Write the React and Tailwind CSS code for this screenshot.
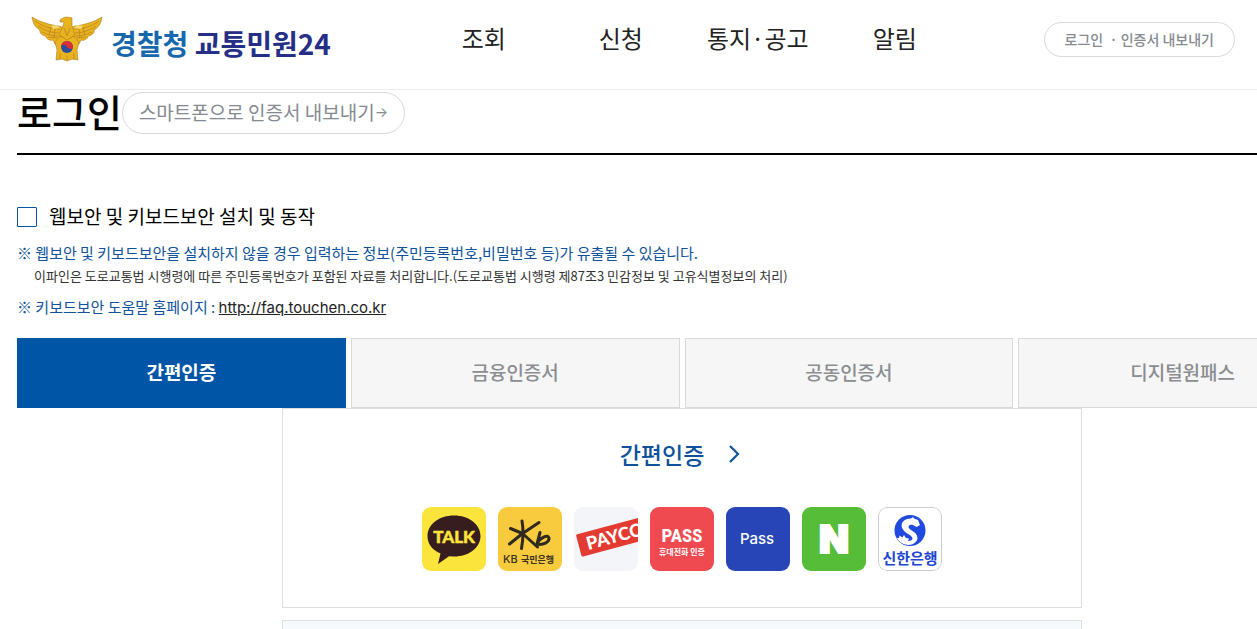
import { useState } from 'react';

const NAV = ['조회', '신청', '통지·공고', '알림'];
const TABS = ['간편인증', '금융인증서', '공동인증서', '디지털원패스'];

function PoliceEmblem() {
  return (
    <svg viewBox="0 0 72 46" className="h-[46px] w-[72px]" aria-hidden="true">
      <g fill="#e9b21f" stroke="#a9781c" strokeWidth="0.6" strokeLinejoin="round">
        <path d="M1 1 C9 6 19 9 28 10 L36 13 L44 10 C53 9 63 6 71 1 C70 8 67 12 63 14 C64 17 60 20 57 20 C57 23 53 25 50 24 L48 28 L24 28 L22 24 C19 25 15 23 15 20 C12 20 8 17 9 14 C5 12 2 8 1 1 Z" />
        <path d="M24 26 L29 20 L36 23 L43 20 L48 26 L46 34 L47 44 L41 43 L36 45 L31 43 L25 44 L26 34 Z" />
        <path d="M29 4 L32 2 C35 0 40 2 41 2 L41 10 L44 19 L36 24 L28 19 L32 10 L33 6 L29 6 Z" />
      </g>
      <g fill="none" stroke="#b98620" strokeWidth="0.8">
        <path d="M4 5 C12 11 21 13 29 13 M7 10 C14 15 22 17 28 17 M11 16 C17 19 23 20 27 20 M17 21 L26 22" />
        <path d="M68 5 C60 11 51 13 43 13 M65 10 C58 15 50 17 44 17 M61 16 C55 19 49 20 45 20 M55 21 L46 22" />
        <path d="M20 11 L18 19 M24 12 L23 22 M52 11 L54 19 M48 12 L49 22 M33 12 L36 20 L39 12 M29 37 V43 M36 40 V44 M43 37 V43" />
      </g>
      <path d="M20 10 L26 9 L29 12 L22 13 Z M52 10 L46 9 L43 12 L50 13 Z" fill="#f8da72" />
      <circle cx="36" cy="31" r="6" fill="#2d4c9c" />
      <path d="M30 31 A6 6 0 0 1 42 31 C41 34 37 33 36 31 C35 28 31 28 30 31 Z" fill="#dc3038" />
    </svg>
  );
}

function KakaoIcon() {
  return (
    <svg viewBox="0 0 64 64" className="size-16">
      <rect width="64" height="64" fill="#fbe43c" />
      <path d="M32 8.500 C46.500 8.500 58.500 17 58.500 29 C58.500 41 46.500 49.500 32 49.500 L27 49.200 L16 57 L18.500 46.500 C10 43 5.500 36.500 5.500 29 C5.500 17 17.500 8.500 32 8.500 Z" fill="#371d1e" />
      <text x="32" y="36" textAnchor="middle" fontSize="17" fontWeight="900" fill="#fbe43c" stroke="#fbe43c" strokeWidth="0.5" strokeLinejoin="round" className="font-['Lato',sans-serif]">TALK</text>
    </svg>
  );
}

function KbIcon() {
  return (
    <svg viewBox="0 0 64 64" className="size-16">
      <rect width="64" height="64" fill="#f8cb3f" />
      <g fill="none" stroke="#2f2a20" strokeWidth="3" strokeLinecap="round" strokeLinejoin="round">
        <path d="M24 14 C25.500 22 25 33 23.500 41.500" />
        <path d="M12.500 21.500 L24.500 26.500 L41 15.500 M24.500 26.500 L11.500 37 M24.500 26.500 L39.500 40" />
        <path d="M42 25.500 L39 37 C45 38.500 51.500 35 51 31 C50 27 43 30 39 36.500" />
      </g>
      <text x="5" y="56" fontSize="11" fontWeight="500" fill="#3a3222" className="font-['Inter',sans-serif]">KB</text>
      <text x="23" y="56" fontSize="9" fontWeight="700" fill="#3a3222" className="font-['Noto_Sans_CJK_KR',sans-serif]">국민은행</text>
    </svg>
  );
}

function PaycoIcon() {
  return (
    <svg viewBox="0 0 64 64" className="size-16">
      <rect width="64" height="64" fill="#f4f5f8" />
      <g transform="rotate(-15 32 32)">
        <rect x="4" y="20" width="75" height="23" rx="1.500" fill="#e33b32" />
        <text x="12" y="38" fontSize="18" fontWeight="900" fill="#fff" className="font-['Lato',sans-serif]">PAYCO</text>
      </g>
    </svg>
  );
}

function PassPhoneIcon() {
  return (
    <svg viewBox="0 0 64 64" className="size-16">
      <rect width="64" height="64" fill="#ef4a50" />
      <text x="32" y="35" textAnchor="middle" fontSize="19" fontWeight="700" fill="#fff" className="font-['Roboto_Condensed','Roboto',sans-serif]">PASS</text>
      <text x="32" y="48" textAnchor="middle" fontSize="8" fontWeight="700" fill="#fff" className="font-['Noto_Sans_CJK_KR',sans-serif]">휴대전화 인증</text>
    </svg>
  );
}

function SamsungPassIcon() {
  return (
    <svg viewBox="0 0 64 64" className="size-16">
      <rect width="64" height="64" fill="#2845b8" />
      <text x="31" y="37" textAnchor="middle" fontSize="15" fontWeight="500" fill="#fff" className="font-['Inter',sans-serif]">Pass</text>
    </svg>
  );
}

function NaverIcon() {
  return (
    <svg viewBox="0 0 64 64" className="size-16">
      <rect width="64" height="64" fill="#55bd38" />
      <text x="32" y="46" textAnchor="middle" fontSize="39" fontWeight="900" fill="#fff" stroke="#fff" strokeWidth="2" className="font-['Inter',sans-serif]">N</text>
    </svg>
  );
}

function ShinhanIcon() {
  return (
    <svg viewBox="0 0 64 64" className="size-16">
      <rect x="0.500" y="0.500" width="63" height="63" rx="8.500" fill="#fff" stroke="#c9cbd0" />
      <circle cx="32" cy="23.500" r="15.500" fill="#1f49df" />
      <path d="M42 18 L38.500 20 L35 18 C31 17 28.500 20 33 23 C41 27 42 34 34 37.500 C29 39 22 37 19 31 L21 31 L21.500 28.500 L24.500 30.500 L26 28 L28 31 L31 31.500 L30 34 C35 34 36.500 31 31 27.500 C22 23 21 15 29 12 L33 11.500 L35 10 L36 11.500 L40 13 Z" fill="#fff" />
      <text x="32" y="57" textAnchor="middle" fontSize="15" fontWeight="700" fill="#2146d3" className="font-['Noto_Sans_CJK_KR',sans-serif]">신한은행</text>
    </svg>
  );
}

const PROVIDERS = [
  { label: '카카오톡', Icon: KakaoIcon },
  { label: 'KB국민은행', Icon: KbIcon },
  { label: 'PAYCO', Icon: PaycoIcon },
  { label: 'PASS', Icon: PassPhoneIcon },
  { label: '삼성패스', Icon: SamsungPassIcon },
  { label: '네이버', Icon: NaverIcon },
  { label: '신한은행', Icon: ShinhanIcon },
];

function Header() {
  return (
    <header className="flex h-[90px] items-start justify-between border-b border-[#ececec] pr-[22px] pl-[31px]">
      <a href="#" className="flex w-[304px] items-start gap-2 pt-4">
        <PoliceEmblem />
        <span className="pt-1 text-[28px] leading-[46px] font-bold whitespace-nowrap">
          <span className="text-[#1767ad]">경찰청</span> <span className="text-[#262f86]">교통민원24</span>
        </span>
      </a>
      <nav className="grid w-[548px] grid-cols-4 pt-5 text-center text-2xl leading-9 text-[#222]">
        {NAV.map((item) => (
          <a key={item} href="#">{item}</a>
        ))}
      </nav>
      <button type="button" className="mt-[22px] h-[35px] rounded-full border border-[#d8dade] px-5 pb-0.5 text-sm font-medium whitespace-nowrap text-[#858990]">
        로그인 &nbsp;· 인증서 내보내기
      </button>
    </header>
  );
}

export default function App() {
  const [tab, setTab] = useState(0);
  const [secure, setSecure] = useState(false);

  return (
    <div className="min-h-screen overflow-x-hidden bg-white font-['Noto_Sans_CJK_KR',sans-serif] text-black">
      <Header />
      <main className="min-w-[1364px] px-[17px]">
        <div className="flex h-[65px] items-start border-b-2 border-black pt-0.5">
          <h1 className="text-[38px] leading-[38px] font-medium">로그인</h1>
          <button type="button" className="flex h-[42px] items-center rounded-full border border-[#d8dade] px-4 pb-0.5 text-[19px] text-[#858990]">
            스마트폰으로 인증서 내보내기<span className="font-['Inter',sans-serif] text-sm">→</span>
          </button>
        </div>

        <section className="pt-[46px]">
          <label className="flex h-8 items-center gap-3 text-[19px] leading-6">
            <input
              type="checkbox"
              checked={secure}
              onChange={(e) => setSecure(e.target.checked)}
              className="size-5 appearance-none rounded-[1px] border border-[#0055a6] bg-white checked:bg-[#0055a6]"
            />
            <span className="pb-0.5">웹보안 및 키보드보안 설치 및 동작</span>
          </label>
          <p className="mt-2 text-[15px] leading-6 text-[#0f529b]">
            ※ 웹보안 및 키보드보안을 설치하지 않을 경우 입력하는 정보(주민등록번호,비밀번호 등)가 유출될 수 있습니다.
          </p>
          <p className="pl-[17px] text-[13px] leading-[22px] text-[#333]">
            이파인은 도로교통법 시행령에 따른 주민등록번호가 포함된 자료를 처리합니다.(도로교통법 시행령 제87조3 민감정보 및 고유식별정보의 처리)
          </p>
          <p className="mt-2 text-[15px] leading-6 text-[#0f529b]">
            ※ 키보드보안 도움말 홈페이지 :{' '}
            <a href="http://faq.touchen.co.kr" className="font-['Inter',sans-serif] text-[#222] underline">http://faq.touchen.co.kr</a>
          </p>
        </section>

        <div role="tablist" className="mt-[18px] grid grid-cols-4 gap-[5px]">
          {TABS.map((name, i) => (
            <button
              key={name}
              type="button"
              role="tab"
              aria-selected={tab === i}
              onClick={() => setTab(i)}
              className={
                tab === i
                  ? 'h-[70px] border border-[#0055a6] bg-[#0055a6] pb-0.5 text-[19px] font-bold text-white'
                  : 'h-[70px] border border-[#d9d9d9] bg-[#f6f6f6] pb-0.5 text-[19px] font-medium text-[#8b8d91]'
              }
            >
              {name}
            </button>
          ))}
        </div>

        <section className="mx-auto h-[200px] w-[800px] border border-[#dedede] pt-[26px]">
          <h2 className="flex items-center justify-center gap-6 pr-1 text-[23px] leading-[38px] font-medium text-[#0f529b]">
            {TABS[tab]}
            <svg viewBox="0 0 12 18" className="h-[18px] w-3" fill="none" stroke="currentColor" strokeWidth="2.200" aria-hidden="true">
              <path d="M2 1 L10 9 L2 17" />
            </svg>
          </h2>
          <div className="mt-[34px] flex justify-center gap-3">
            {PROVIDERS.map(({ label, Icon }) => (
              <button key={label} type="button" aria-label={label} className="size-16 overflow-hidden rounded-[9px]">
                <Icon />
              </button>
            ))}
          </div>
        </section>
        <section className="mx-auto mt-3 h-40 w-[800px] border border-[#dce3e8] bg-[#f6fafd]" />
      </main>
    </div>
  );
}
